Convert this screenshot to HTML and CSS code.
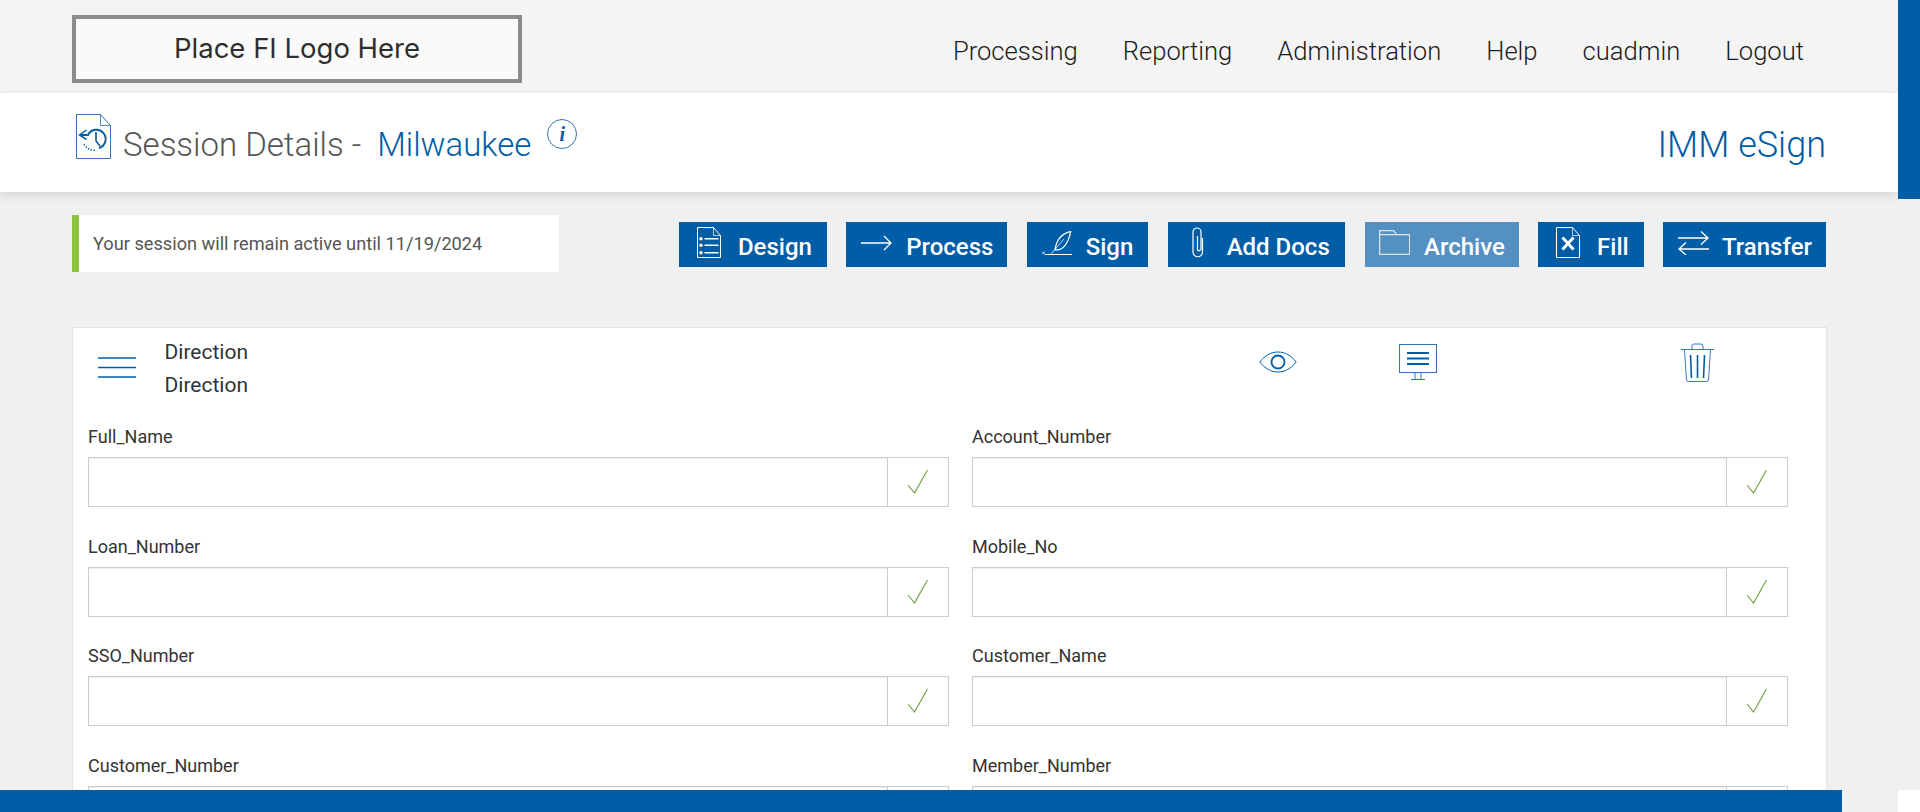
FILE: index.html
```html
<!DOCTYPE html>
<html lang="en">
<head>
<meta charset="utf-8">
<title>Session Details</title>
<link rel="stylesheet" href="styles.css">
</head>
<body>
<div class="page">
  <header class="topbar">
    <div class="logo"><span>Place FI Logo Here</span></div>
    <nav class="nav">
      <a>Processing</a><a>Reporting</a><a>Administration</a><a>Help</a><a>cuadmin</a><a>Logout</a>
    </nav>
  </header>
  <section class="titlebar">
    <svg class="doc-icon" viewBox="0 0 35 45" fill="none" stroke="#005da6">
      <path d="M.5.5h24l10 11v33H.5z" stroke="#2f72b5"/><path d="M24.5.5v11h10" stroke-width=".7"/>
      <path d="M10.500 16L3.500 21l7 4.500" stroke-width="1.500"/>
      <path d="M4 21h8A9.300 9.300 0 1 1 23 34" stroke-width="2"/>
      <path d="M20 18v9l4 5" stroke-width="1.600"/>
      <path d="M8 30q3 6 11 6.500" stroke-width="1.500" stroke-dasharray="1.500 1.500"/>
    </svg>
    <h1 class="title">Session Details -<span class="title-name">Milwaukee</span></h1>
    <span class="info"><i>i</i></span>
    <div class="product">IMM eSign</div>
  </section>
  <section class="toolbar">
    <div class="notice">Your session will remain active until 11/19/2024</div>
    <div class="actions">
      <a class="btn btn-design">
        <svg class="ic ic-design" viewBox="0 0 24 31" fill="none" stroke="#fff"><path d="M.5.5h16l7 8v22H.5z"/><path d="M16.500.5v8h7" stroke-width=".7"/><path d="M7.500 11.700h14M7.500 18.300h14M7.500 25.700h14" stroke-width="1.500"/><circle cx="4" cy="11.700" r="1.700" fill="#fff" stroke="none"/><circle cx="4" cy="18.300" r="1.700" fill="#fff" stroke="none"/><circle cx="4" cy="25.700" r="1.700" fill="#fff" stroke="none"/></svg>
        Design</a>
      <a class="btn btn-process">
        <svg class="ic ic-process" viewBox="0 0 31 16" fill="none" stroke="#fff" stroke-width="1.300"><path d="M0 8h30M23 1l7 7-7 7"/></svg>
        Process</a>
      <a class="btn btn-sign">
        <svg class="ic ic-sign" viewBox="0 0 30 24" fill="none" stroke="#fff"><path d="M3 23.500h27" stroke-width="1"/><path d="M0 20.500l3 3m0-3l-3 3" stroke-width=".8"/><path d="M28.700.7C22 2 15 6 13 18.700 20 20 26 14 28.700.7z" stroke-width="1.200"/><path d="M9 23L22 8" stroke-width=".8"/></svg>
        Sign</a>
      <a class="btn btn-docs">
        <svg class="ic ic-docs" viewBox="0 0 12 31" fill="none" stroke="#fff" stroke-width="1.200"><path d="M10.500 11v14a4.700 4.700 0 0 1-9.500 0V5a4 4 0 0 1 8 0v17a2 2 0 0 1-3.500 1V9"/></svg>
        Add Docs</a>
      <a class="btn btn-archive is-disabled">
        <svg class="ic ic-archive" viewBox="0 0 31 25" fill="none" stroke="#e4e4e4" stroke-width="1.200"><path d="M.6 24.400V.6h14l3 4h13v19.800zM.6 4.600h17"/></svg>
        Archive</a>
      <a class="btn btn-fill">
        <svg class="ic ic-fill" viewBox="0 0 24 31" fill="none" stroke="#fff"><path d="M.5.500h16l7 8v22H.5z"/><path d="M16.500.5v8h7" stroke-width=".7"/><path d="M6.500 10.500l11 12M17.500 10.500L6.500 22.500" stroke-width="3"/></svg>
        Fill</a>
      <a class="btn btn-transfer">
        <svg class="ic ic-transfer" viewBox="0 0 31 24" fill="none" stroke="#fff" stroke-width="1.300"><path d="M0 7h30M23 .5 30 7l-7 6.500M31 18H1M8 11.500 1 18l7 6"/></svg>
        Transfer</a>
    </div>
  </section>
  <section class="card">
    <div class="card-head">
      <svg class="menu-icon" viewBox="0 0 38 21" fill="none" stroke="#005da6" stroke-width="1.500"><path d="M0 1h38M0 10.500h38M0 20h38"/></svg>
      <div class="card-titles"><div>Direction</div><div>Direction</div></div>
      <svg class="tool tool-eye" viewBox="0 0 38 22" fill="none" stroke="#005da6"><path d="M.8 11C6 4.500 12 1 19 1s13 3.500 18.200 10C32 17.500 26 21 19 21S6 17.500.8 11z"/><circle cx="19" cy="11" r="6.500" stroke-width="1.800"/></svg>
      <svg class="tool tool-screen" viewBox="0 0 38 36" fill="none" stroke="#2f72b5"><path d="M.5.500h37v28H.5z" stroke-width="1.100"/><path d="M8 9h22M8 14.500h22M8 20h22" stroke="#005da6" stroke-width="2"/><path d="M16 29v6M22 29v6M12 35.500h14"/></svg>
      <svg class="tool tool-trash" viewBox="0 0 33 39" fill="none" stroke="#3a7bbd"><path d="M0 6.500h33M11 6V3q0-2 2-2h7q2 0 2 2v3"/><path d="M3.500 7l2 30q0 1.500 2 1.500h18q2 0 2-1.500l2-30"/><path d="M9.500 12l1 23M16.500 12v23M23.500 12l-1 23" stroke="#005da6" stroke-width="1.600"/></svg>
    </div>
    <div class="fields">
      <div class="field"><label>Full_Name</label><div class="control"><div class="box"></div><div class="ok"><svg viewBox="0 0 20 24" fill="none" stroke="#6c9f3c" stroke-width="1.100"><path d="M0 15l6.500 8L19.500 0"/></svg></div></div></div>
      <div class="field"><label>Account_Number</label><div class="control"><div class="box"></div><div class="ok"><svg viewBox="0 0 20 24" fill="none" stroke="#6c9f3c" stroke-width="1.100"><path d="M0 15l6.500 8L19.500 0"/></svg></div></div></div>
      <div class="field"><label>Loan_Number</label><div class="control"><div class="box"></div><div class="ok"><svg viewBox="0 0 20 24" fill="none" stroke="#6c9f3c" stroke-width="1.100"><path d="M0 15l6.500 8L19.500 0"/></svg></div></div></div>
      <div class="field"><label>Mobile_No</label><div class="control"><div class="box"></div><div class="ok"><svg viewBox="0 0 20 24" fill="none" stroke="#6c9f3c" stroke-width="1.100"><path d="M0 15l6.500 8L19.500 0"/></svg></div></div></div>
      <div class="field"><label>SSO_Number</label><div class="control"><div class="box"></div><div class="ok"><svg viewBox="0 0 20 24" fill="none" stroke="#6c9f3c" stroke-width="1.100"><path d="M0 15l6.500 8L19.500 0"/></svg></div></div></div>
      <div class="field"><label>Customer_Name</label><div class="control"><div class="box"></div><div class="ok"><svg viewBox="0 0 20 24" fill="none" stroke="#6c9f3c" stroke-width="1.100"><path d="M0 15l6.500 8L19.500 0"/></svg></div></div></div>
      <div class="field"><label>Customer_Number</label><div class="control"><div class="box"></div><div class="ok"></div></div></div>
      <div class="field"><label>Member_Number</label><div class="control"><div class="box"></div><div class="ok"></div></div></div>
    </div>
  </section>
</div>
<div class="scroll-v"><div class="thumb"></div></div>
<div class="scroll-h"><div class="thumb"></div></div>
<div class="scroll-corner"></div>
</body>
</html>
```
FILE: styles.css
```css
* { box-sizing: border-box; }
html, body { margin: 0; height: 100%; overflow: hidden; }
body { background: #f0f0f0; font-family: Roboto, "Liberation Sans", sans-serif; color: #333; }
.page { width: 1898px; height: 812px; overflow: hidden; }

.topbar { height: 93px; background: #f4f4f4; display: flex; justify-content: space-between; padding: 15px 94px 0 72px; }
.logo { width: 450px; height: 68px; border: 4px solid #8c8c8c; background: #fafafa; display: flex; align-items: center; justify-content: center; padding-bottom: 3px; font-family: Inter, sans-serif; font-size: 27.500px; font-weight: 400; color: #2e2e2e; }
.nav { display: flex; gap: 45px; font-size: 25.600px; font-weight: 300; color: #1c1c1c; padding-top: 21px; }

.titlebar { height: 99px; background: #fff; box-shadow: 0 3px 10px rgba(0,0,0,.12); display: flex; align-items: flex-start; padding: 21px 72px 0 76px; position: relative; }
.doc-icon { width: 35px; height: 45px; flex: none; }
.title { margin: 11px 0 0 12px; font-size: 33px; line-height: 40px; font-weight: 300; color: #555; white-space: pre; }
.title-name { color: #005da6; margin-left: 16px; }
.info { width: 30px; height: 30px; margin: 5px 0 0 16px; border: 1px solid #2f72b5; border-radius: 50%; display: flex; align-items: center; justify-content: center; font-family: "Liberation Serif", serif; font-size: 20px; font-weight: 700; color: #005da6; }
.product { margin: 11px 0 0 auto; font-size: 36px; line-height: 40px; font-weight: 300; color: #005da6; }

.toolbar { display: flex; justify-content: space-between; align-items: flex-start; padding: 23px 72px 0; height: 135px; }
.notice { width: 487px; height: 57px; background: #fff; border-left: 7px solid #8cc63f; padding-left: 14px; line-height: 57px; font-size: 18.200px; font-weight: 400; color: #555; }
.actions { display: flex; gap: 19.300px; margin-top: 7px; }
.btn { height: 45px; background: #005da6; color: #fff; font-size: 24px; font-weight: 500; display: flex; align-items: center; white-space: nowrap; padding-top: 4px; }
.btn.is-disabled { background: #5590c2; }
.ic { flex: none; display: block; margin-top: -8px; }
.btn-design { padding-left: 18px; padding-right: 15px; } .ic-design { width: 24px; height: 31px; margin-right: 17px; }
.btn-process { padding-left: 15px; padding-right: 14px; } .ic-process { width: 31px; height: 16px; margin-right: 14px; }
.btn-sign { padding-left: 15px; padding-right: 15px; } .ic-sign { width: 30px; height: 24px; margin-right: 14px; }
.btn-docs { padding-left: 24px; padding-right: 15px; margin-right: 1px; } .ic-docs { width: 12px; height: 31px; margin-right: 23px; }
.btn-archive { padding-left: 14px; padding-right: 14px; } .ic-archive { width: 31px; height: 25px; margin-right: 14px; }
.btn-fill { padding-left: 18px; padding-right: 15px; } .ic-fill { width: 24px; height: 31px; margin-right: 17px; }
.btn-transfer { padding-left: 15px; padding-right: 14px; } .ic-transfer { width: 31px; height: 24px; margin-right: 13px; }

.card { margin-left: 72px; width: 1755px; height: 600px; background: #fff; border: 1px solid #e2e2e2; padding: 0 0 0 15px; }
.card-head { display: flex; align-items: flex-start; height: 98px; }
.menu-icon { width: 38px; height: 21px; flex: none; margin: 29px 0 0 10px; }
.card-titles { margin: 8px 0 0 28.500px; font-size: 21px; line-height: 33px; color: #333; }
.tool { flex: none; display: block; }
.tool-eye { width: 38px; height: 22px; margin: 23px 0 0 auto; }
.tool-screen { width: 38px; height: 36px; margin: 16px 0 0 102px; }
.tool-trash { width: 33px; height: 39px; margin: 15px 112px 0 244px; }

.fields { display: grid; grid-template-columns: 861px 816px; column-gap: 23px; grid-auto-rows: 109.500px; }
.field { display: flex; flex-direction: column; justify-content: flex-start; }
.field label { font-size: 18px; line-height: 21px; color: #333; margin-bottom: 10px; }
.control { height: 50px; flex: none; display: flex; border: 1px solid #ccc; }
.box { flex: 1; box-shadow: inset 0 1px 1px rgba(0,0,0,.075); }
.ok { width: 61px; flex: none; border-left: 1px solid #ccc; display: flex; align-items: center; justify-content: center; }
.ok svg { width: 20px; height: 24px; display: block; }

.scroll-v { position: absolute; right: 0; top: 0; width: 22px; height: 790px; background: #f0f0f0; }
.scroll-v .thumb { height: 199px; background: #005da6; }
.scroll-h { position: absolute; left: 0; bottom: 0; width: 1898px; height: 22px; background: #f0f0f0; }
.scroll-h .thumb { width: 1842px; height: 22px; background: #005da6; }
.scroll-corner { position: absolute; right: 0; bottom: 0; width: 22px; height: 22px; background: #fff; }
```
